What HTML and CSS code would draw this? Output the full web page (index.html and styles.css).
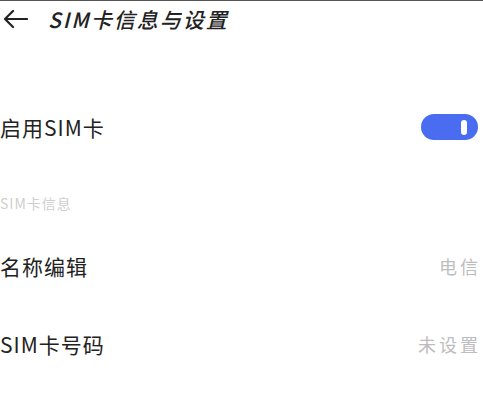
FILE: index.html
```html
<!DOCTYPE html>
<html lang="zh">
<head>
<meta charset="utf-8">
<link rel="stylesheet" href="styles.css">
</head>
<body>
<div class="page">
  <header class="header">
    <svg class="back" width="26" height="20" viewBox="0 0 26 20">
      <path d="M25 10H3M11 2L3 10l8 8" fill="none" stroke="#222" stroke-width="2.2" stroke-linecap="round" stroke-linejoin="round"/>
    </svg>
    <h1 class="title">SIM卡信息与设置</h1>
  </header>
  <div class="row row-toggle">
    <span class="label">启用SIM卡</span>
    <span class="toggle"><span class="knob"></span></span>
  </div>
  <div class="section">SIM卡信息</div>
  <div class="row row-name">
    <span class="label">名称编辑</span>
    <span class="value">电信</span>
  </div>
  <div class="row row-num">
    <span class="label">SIM卡号码</span>
    <span class="value">未设置</span>
  </div>
</div>
</body>
</html>
```
FILE: styles.css
```css
html, body {
  margin: 0;
  padding: 0;
  background: #fff;
}
.page {
  width: 483px;
  height: 403px;
  border-top: 1px solid #555;
  box-sizing: border-box;
  font-family: "Noto Sans CJK SC", "Noto Sans", sans-serif;
  color: #222;
}
.header {
  display: flex;
  align-items: center;
  height: 36px;
  padding-left: 2px;
}
.back {
  display: block;
}
.title {
  margin: 0 0 0 20px;
  font-size: 21px;
  font-weight: 500;
  letter-spacing: 2px;
  font-style: italic;
  line-height: 1;
}
.row {
  display: flex;
  justify-content: space-between;
  align-items: center;
  padding-right: 5px;
}
.label {
  font-size: 21px;
  letter-spacing: 1px;
  line-height: 1;
}
.row-toggle {
  margin-top: 76px;
  height: 28px;
}
.toggle {
  width: 57px;
  height: 26px;
  border-radius: 13px;
  background: #4a6cf0;
  display: flex;
  align-items: center;
  justify-content: flex-end;
  padding-right: 11px;
  box-sizing: border-box;
}
.knob {
  width: 6px;
  height: 15px;
  border-radius: 3px;
  background: #fff;
}
.section {
  margin-top: 55px;
  font-size: 14px;
  color: #cfcfcf;
  line-height: 1;
  letter-spacing: 1px;
}
.row-name {
  margin-top: 43px;
  height: 26px;
}
.row-num {
  margin-top: 52px;
  height: 26px;
}
.row-name, .row-num {
  padding-right: 2px;
}
.value {
  font-size: 18px;
  color: #bdbdbd;
  letter-spacing: 3px;
  line-height: 1;
}
```
